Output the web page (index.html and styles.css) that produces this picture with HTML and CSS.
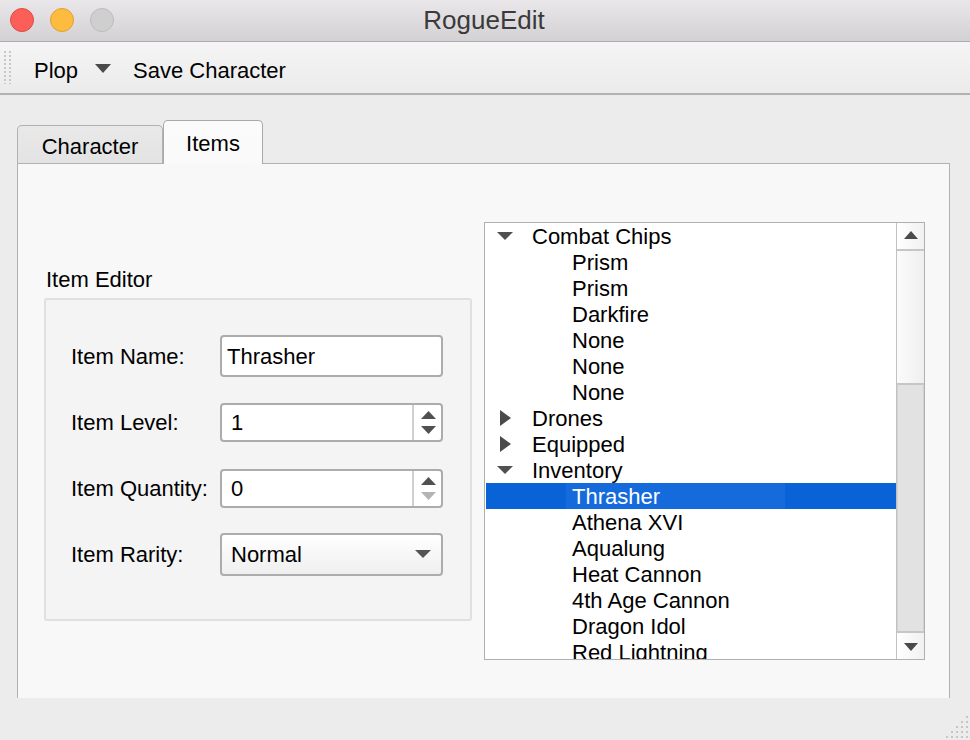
FILE: index.html
```html
<!DOCTYPE html>
<html>
<head>
<meta charset="utf-8">
<title>RogueEdit</title>
<link rel="stylesheet" href="styles.css">
</head>
<body>
<div class="window">
  <header class="titlebar">
    <div class="lights">
      <span class="light red"></span>
      <span class="light yellow"></span>
      <span class="light gray"></span>
    </div>
    <div class="title">RogueEdit</div>
    <div></div>
  </header>

  <div class="toolbar">
    <div class="grip"></div>
    <span class="tool plop">Plop</span>
    <svg class="tool-arrow" width="16" height="9" viewBox="0 0 16 9"><path d="M0 0H16L8 9Z"/></svg>
    <span class="tool save">Save Character</span>
  </div>

  <main class="main">
    <div class="tabbar">
      <div class="tab">Character</div>
      <div class="tab active">Items</div>
    </div>
    <section class="pane">
      <div class="editor">
        <div class="group-title">Item Editor</div>
        <div class="group">
          <div class="row">
            <label class="row-label">Item Name:</label>
            <div class="field text-field">Thrasher</div>
          </div>
          <div class="row">
            <label class="row-label">Item Level:</label>
            <div class="field spin">
              <span class="spin-value">1</span>
              <span class="spin-btns">
                <svg width="15" height="8" viewBox="0 0 15 8"><path d="M0 8H15L7.5 0Z" fill="#505050"/></svg>
                <svg width="15" height="8" viewBox="0 0 15 8"><path d="M0 0H15L7.5 8Z" fill="#505050"/></svg>
              </span>
            </div>
          </div>
          <div class="row">
            <label class="row-label">Item Quantity:</label>
            <div class="field spin">
              <span class="spin-value">0</span>
              <span class="spin-btns">
                <svg width="15" height="8" viewBox="0 0 15 8"><path d="M0 8H15L7.5 0Z" fill="#505050"/></svg>
                <svg width="15" height="8" viewBox="0 0 15 8"><path d="M0 0H15L7.5 8Z" fill="#b4b4b4"/></svg>
              </span>
            </div>
          </div>
          <div class="row">
            <label class="row-label">Item Rarity:</label>
            <div class="field combo">
              <span class="combo-value">Normal</span>
              <svg width="16" height="8" viewBox="0 0 16 8"><path d="M0 0H16L8 8Z" fill="#555"/></svg>
            </div>
          </div>
        </div>
      </div>

      <div class="tree">
        <div class="tree-list">
          <div class="node"><svg class="exp" width="16" height="8" viewBox="0 0 16 8"><path d="M0 0H16L8 8Z"/></svg><span>Combat Chips</span></div>
          <div class="leaf"><span>Prism</span></div>
          <div class="leaf"><span>Prism</span></div>
          <div class="leaf"><span>Darkfire</span></div>
          <div class="leaf"><span>None</span></div>
          <div class="leaf"><span>None</span></div>
          <div class="leaf"><span>None</span></div>
          <div class="node"><svg class="col" width="11" height="16" viewBox="0 0 11 16"><path d="M0 0V16L11 8Z"/></svg><span>Drones</span></div>
          <div class="node"><svg class="col" width="11" height="16" viewBox="0 0 11 16"><path d="M0 0V16L11 8Z"/></svg><span>Equipped</span></div>
          <div class="node"><svg class="exp" width="16" height="8" viewBox="0 0 16 8"><path d="M0 0H16L8 8Z"/></svg><span>Inventory</span></div>
          <div class="leaf selected"><span>Thrasher</span></div>
          <div class="leaf"><span>Athena XVI</span></div>
          <div class="leaf"><span>Aqualung</span></div>
          <div class="leaf"><span>Heat Cannon</span></div>
          <div class="leaf"><span>4th Age Cannon</span></div>
          <div class="leaf"><span>Dragon Idol</span></div>
          <div class="leaf"><span>Red Lightning</span></div>
        </div>
        <div class="scrollbar">
          <div class="sb-btn sb-up"><svg width="14" height="8" viewBox="0 0 14 8"><path d="M0 8H14L7 0Z" fill="#4a4a4a"/></svg></div>
          <div class="sb-track"></div>
          <div class="sb-thumb"></div>
          <div class="sb-btn sb-down"><svg width="14" height="8" viewBox="0 0 14 8"><path d="M0 0H14L7 8Z" fill="#4a4a4a"/></svg></div>
        </div>
      </div>
    </section>
  </main>

  <footer class="statusbar">
    <svg class="size-grip" width="30" height="28" viewBox="0 0 30 28">
      <g fill="#c6c6c6">
        <rect x="26" y="4" width="2" height="2"/>
        <rect x="21" y="9" width="2" height="2"/><rect x="26" y="9" width="2" height="2"/>
        <rect x="16" y="14" width="2" height="2"/><rect x="21" y="14" width="2" height="2"/><rect x="26" y="14" width="2" height="2"/>
        <rect x="11" y="19" width="2" height="2"/><rect x="16" y="19" width="2" height="2"/><rect x="21" y="19" width="2" height="2"/><rect x="26" y="19" width="2" height="2"/>
        <rect x="6" y="24" width="2" height="2"/><rect x="11" y="24" width="2" height="2"/><rect x="16" y="24" width="2" height="2"/><rect x="21" y="24" width="2" height="2"/><rect x="26" y="24" width="2" height="2"/>
      </g>
    </svg>
  </footer>
</div>
</body>
</html>
```

FILE: styles.css
```css
* { box-sizing: border-box; }

html, body {
  margin: 0;
  padding: 0;
}

body {
  width: 970px;
  height: 740px;
  overflow: hidden;
  background: #ececec;
  font-family: "Liberation Sans", Arial, sans-serif;
  font-size: 22px;
  color: #000;
}

.window {
  display: flex;
  flex-direction: column;
  height: 740px;
}

/* Title bar */
.titlebar {
  height: 42px;
  flex: none;
  display: grid;
  grid-template-columns: 1fr auto 1fr;
  align-items: center;
  background: linear-gradient(#e9e7e9, #d3d1d3);
  border-bottom: 1px solid #adabad;
}

.lights {
  display: flex;
  gap: 16px;
  padding-left: 10px;
  padding-bottom: 1px;
}

.light {
  width: 24px;
  height: 24px;
  border-radius: 50%;
  border: 1px solid;
}
.light.red { background: #fc5f57; border-color: #df4a44; }
.light.yellow { background: #fdbc3f; border-color: #dfa12c; }
.light.gray { background: #d0cfd0; border-color: #bcbbbc; }

.title {
  font-family: "Liberation Sans", Arial, sans-serif;
  font-size: 26px;
  color: #3a3a3a;
  padding-bottom: 1px;
  margin-left: -2px;
}

/* Toolbar */
.toolbar {
  height: 53px;
  flex: none;
  display: flex;
  align-items: center;
  background: linear-gradient(#f5f5f5, #ebebeb);
  border-bottom: 2px solid #b2b2b2;
}

.grip {
  width: 9px;
  height: 33px;
  margin-left: 4px;
  background-image: radial-gradient(circle at 1px 1px, #c8c8c8 1px, transparent 1.3px);
  background-size: 5px 4px;
}

.tool {
  padding-top: 6px;
}
.plop { margin-left: 21px; }
.tool-arrow {
  margin-left: 17px;
  margin-top: 2px;
  fill: #4a4a4a;
}
.save { margin-left: 22px; }

/* Main area */
.main {
  flex: 1;
  display: flex;
  flex-direction: column;
  padding: 25px 20px 0 17px;
}

.tabbar {
  height: 43px;
  flex: none;
  display: flex;
  align-items: flex-end;
}

.tab {
  height: 38px;
  width: 146px;
  display: flex;
  align-items: center;
  justify-content: center;
  border: 1px solid #b1b1b1;
  border-bottom: none;
  border-radius: 5px 5px 0 0;
  background: linear-gradient(#e9e9e9, #e3e3e3);
  padding-top: 5px;
}

.tab.active {
  width: 100px;
  height: 44px;
  margin-bottom: -1px;
  position: relative;
  z-index: 1;
  border-color: #a9a9a9;
  background: linear-gradient(#fbfbfb, #fafafa);
  padding-top: 3px;
  padding-bottom: 0;
}

.pane {
  flex: 1;
  display: flex;
  align-items: flex-start;
  border: 1px solid #b1b1b1;
  border-bottom: none;
  background: #f8f8f8;
  padding: 58px 24px 0 26px;
}

/* Editor group */
.editor {
  width: 428px;
  margin-top: 43px;
}

.group-title {
  height: 26px;
  line-height: 26px;
  padding-left: 2px;
  padding-top: 2px;
  margin-bottom: 7px;
}

.group {
  border: 2px solid #e0e0e0;
  border-radius: 3px;
  background: #f4f4f4;
  padding: 23px 0 32px 0;
}

.row {
  height: 66px;
  display: flex;
  align-items: center;
}

.row-label {
  width: 174px;
  padding-left: 25px;
  padding-top: 2px;
  flex: none;
}

.field {
  width: 223px;
  border: 2px solid #acacac;
  border-radius: 4px;
  background: #fff;
  display: flex;
  align-items: center;
}

.text-field {
  height: 42px;
  padding-left: 5px;
  padding-top: 1px;
}

.spin {
  height: 39px;
}

.spin-value {
  flex: 1;
  padding-left: 9px;
  padding-top: 2px;
}

.spin-btns {
  width: 29px;
  height: 100%;
  border-left: 2px solid #d0d0d0;
  display: flex;
  flex-direction: column;
  align-items: center;
  justify-content: center;
  gap: 7px;
  padding-left: 1px;
}

.combo {
  height: 43px;
  justify-content: space-between;
  padding: 0 10px 0 9px;
  background: linear-gradient(#ffffff, #efefef);
}

.combo-value {
  padding-top: 1px;
}

/* Tree */
.tree {
  width: 441px;
  height: 438px;
  margin-left: 12px;
  border: 1px solid #b0b0b0;
  background: #fff;
  display: flex;
  flex: none;
}

.tree-list {
  flex: 1;
  overflow: hidden;
}

.node, .leaf {
  height: 26px;
  line-height: 26px;
  white-space: nowrap;
  display: flex;
  align-items: center;
}

.node span {
  padding-top: 2px;
}

.node svg {
  fill: #505050;
  flex: none;
  margin-left: 12px;
  margin-right: 19px;
}

.node svg.col {
  margin-left: 15px;
  margin-right: 21px;
  fill: #4a4a4a;
}

.leaf {
  padding-left: 81px;
}

.leaf span {
  padding-left: 6px;
  padding-top: 2px;
  display: inline-block;
  width: 219px;
  line-height: 24px;
}

.leaf.selected {
  background: #0963d6;
  color: #fff;
  margin-left: 1px;
  padding-left: 80px;
}

.leaf.selected span {
  background: #156bdb;
}

/* Scrollbar */
.scrollbar {
  width: 28px;
  flex: none;
  border-left: 1px solid #c2c2c2;
  display: flex;
  flex-direction: column;
}

.sb-btn {
  height: 28px;
  flex: none;
  display: flex;
  align-items: center;
  justify-content: center;
  background: linear-gradient(90deg, #ffffff, #f1f1f1);
}

.sb-up {
  border-bottom: 2px solid #c6c6c6;
  padding-bottom: 2px;
}

.sb-down {
  border-top: 2px solid #c6c6c6;
  padding-top: 2px;
}

.sb-track {
  height: 132px;
  flex: none;
  background: linear-gradient(90deg, #fbfbfb, #efefef);
}

.sb-thumb {
  flex: 1;
  background: #e2e2e2;
  border-top: 2px solid #c6c6c6;
  border-left: 1px solid #d2d2d2;
  border-right: 1px solid #d2d2d2;
}

/* Footer */
.statusbar {
  height: 42px;
  flex: none;
  display: flex;
  justify-content: flex-end;
  align-items: flex-end;
}

.size-grip {
  display: block;
}
```
